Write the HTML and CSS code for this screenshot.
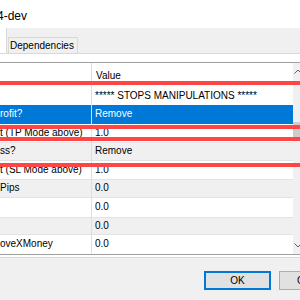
FILE: index.html
```html
<!DOCTYPE html>
<html lang="en">
<head>
  <meta charset="UTF-8" />
  <title>Inputs</title>
  <link rel="stylesheet" href="styles.css">
</head>
<body>
  <div class="titlebar">4-dev</div>

  <div class="tabs">
    <div class="tab-active"></div>
    <div class="tab">Dependencies</div>
  </div>

  <div class="page">
    <div class="list">
      <div class="grid">
        <div class="row head"><div class="name"></div><div class="value">Value</div></div>
        <div class="row"><div class="name"></div><div class="value">***** STOPS MANIPULATIONS *****</div></div>
        <div class="row sel"><div class="name">rofit?</div><div class="value">Remove</div></div>
        <div class="row"><div class="name">t (TP Mode above)</div><div class="value">1.0</div></div>
        <div class="row alt"><div class="name">ss?</div><div class="value">Remove</div></div>
        <div class="row"><div class="name">t (SL Mode above)</div><div class="value">1.0</div></div>
        <div class="row alt"><div class="name">Pips</div><div class="value">0.0</div></div>
        <div class="row"><div class="name"></div><div class="value">0.0</div></div>
        <div class="row alt"><div class="name"></div><div class="value">0.0</div></div>
        <div class="row"><div class="name">oveXMoney</div><div class="value">0.0</div></div>
      </div>

      <div class="scroll">
        <div class="arrow">
          <svg width="8" height="5" viewBox="0 0 8 5"><path d="M0.5 4.5 L4 1 L7.5 4.5" fill="none" stroke="#606060" stroke-width="1"/></svg>
        </div>
        <div class="thumb"></div>
        <div class="arrow down">
          <svg width="8" height="5" viewBox="0 0 8 5"><path d="M0.5 0.5 L4 4 L7.5 0.5" fill="none" stroke="#606060" stroke-width="1"/></svg>
        </div>
      </div>
    </div>
  </div>

  <div class="footer">
    <button class="btn ok">OK</button>
    <button class="btn">Cancel</button>
  </div>

  <!-- red strike marks drawn over the list -->
  <div class="mark m1"></div>
  <div class="mark m2"></div>
  <div class="mark m3"></div>
  <div class="mark m4"></div>
</body>
</html>
```

FILE: styles.css
```css
body {
  margin: 0;
  width: 300px;
  height: 300px;
  overflow: hidden;
  position: relative;
  background: #f0f0f0;
  font-family: "Liberation Sans", Arial, sans-serif;
  font-size: 10px;
  color: #000;
}

.titlebar {
  height: 28px;
  background: #fff;
  font-size: 12px;
  line-height: 32px;
  text-indent: -3px;
  white-space: nowrap;
}

.tabs {
  display: flex;
  align-items: flex-end;
  height: 25px;
}

.tab-active {
  width: 6px;
  height: 25px;
  background: #fff;
  border-right: 1px solid #d9d9d9;
}

.tab {
  margin-left: 1px;
  height: 15px;
  padding: 0 3px 0 1px;
  line-height: 15px;
  background: #f0f0f0;
  border: 1px solid #d9d9d9;
  border-bottom: 0;
}

.page {
  background: #fff;
  border-top: 1px solid #d9d9d9;
  border-bottom: 1px solid #d9d9d9;
  padding: 8px 0 2px;
}

.list {
  display: flex;
  height: 191px;
  border-top: 1px solid #a0a0a0;
  border-bottom: 1px solid #a0a0a0;
  overflow: hidden;
}

.grid {
  width: 293px;
  flex-shrink: 0;
}

.row {
  display: flex;
  height: 18.6px;
  line-height: 18.6px;
  white-space: nowrap;
}

.row.head {
  height: 23.5px;
  line-height: 26px;
}

.row.alt {
  background: #f0f0f0;
  box-shadow: inset 0 1px #e3e3e3, inset 0 -1px #e3e3e3;
}

.row.sel {
  background: #0078d7;
  color: #fff;
}

.name {
  width: 91px;
  overflow: hidden;
  border-right: 1px solid #dedede;
}

.value {
  padding-left: 3px;
}

.head .value {
  padding-left: 4px;
}

.scroll {
  width: 17px;
  flex-shrink: 0;
  display: flex;
  flex-direction: column;
  background: #f0f0f0;
}

.arrow {
  height: 17px;
  padding-left: 1px;
  display: flex;
  align-items: center;
}

.arrow.down {
  margin-top: auto;
  padding-top: 2px;
}

.thumb {
  height: 16px;
  margin-top: 42px;
  background: #cdcdcd;
}

.footer {
  display: flex;
  gap: 8px;
  padding: 13px 0 0 204px;
}

.btn {
  flex-shrink: 0;
  width: 67px;
  height: 19px;
  padding: 0;
  background: #e1e1e1;
  border: 1px solid #adadad;
  font-family: "Liberation Sans", Arial, sans-serif;
  font-size: 10px;
  color: #000;
}

.btn.ok {
  border: 2px solid #0078d7;
}

.mark {
  position: absolute;
  left: 0;
  width: 300px;
  height: 4px;
  background: #ff4545;
}

.m1 { top: 81px; }
.m2 { top: 125px; }
.m3 { top: 137px; }
.m4 { top: 163px; }
```
